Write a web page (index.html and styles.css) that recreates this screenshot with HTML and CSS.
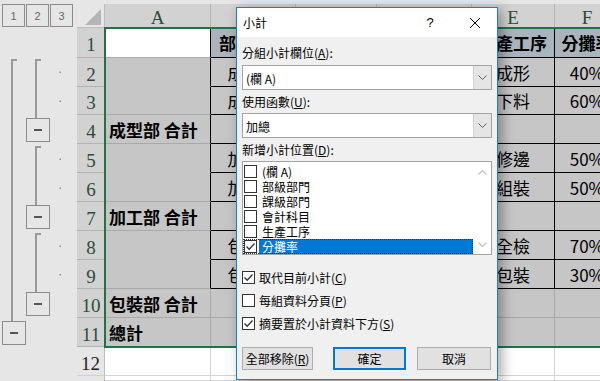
FILE: index.html
```html
<!DOCTYPE html>
<html lang="zh-Hant">
<head>
    <meta charset="UTF-8">
    <title>小計</title>
    <link rel="stylesheet" href="styles.css">
</head>
<body>
    <div class="sheet">
        <!-- encabezado -->
        <div class="levels"><span>1</span><span>2</span><span>3</span></div>
        <div class="corner">
            <svg width="27" height="23" viewBox="0 0 27 23"><polygon points="8,21 24,21 24,5" fill="#b4b4b4"/></svg>
        </div>
        <div class="ch">A</div>
        <div class="ch">B</div>
        <div class="ch">C</div>
        <div class="ch">D</div>
        <div class="ch">E</div>
        <div class="ch">F</div>

        <!-- esquema (outline) -->
        <div class="outline">
            <svg width="77" height="353" viewBox="0 28 77 353">
                <g fill="#9a9a9a">
                    <rect x="11" y="59" width="2" height="262"/>
                    <rect x="11" y="59" width="6" height="2"/>
                    <rect x="35" y="59" width="2" height="59"/>
                    <rect x="35" y="59" width="6" height="2"/>
                    <rect x="35" y="146" width="2" height="59"/>
                    <rect x="35" y="146" width="6" height="2"/>
                    <rect x="35" y="233" width="2" height="59"/>
                    <rect x="35" y="233" width="6" height="2"/>
                </g>
                <g fill="#8f8f8f">
                    <rect x="59.5" y="71.5" width="1.5" height="1.5"/>
                    <rect x="59.5" y="100.5" width="1.5" height="1.5"/>
                    <rect x="59.5" y="158.5" width="1.5" height="1.5"/>
                    <rect x="59.5" y="187.5" width="1.5" height="1.5"/>
                    <rect x="59.5" y="245.5" width="1.5" height="1.5"/>
                    <rect x="59.5" y="274" width="1.5" height="1.5"/>
                </g>
                <g fill="#e6e6e6" stroke="#8c8c8c">
                    <rect x="26.5" y="118.5" width="23" height="23"/>
                    <rect x="26.5" y="205.5" width="23" height="23"/>
                    <rect x="26.5" y="292.5" width="23" height="23"/>
                    <rect x="2.5" y="321.5" width="23" height="23"/>
                </g>
                <g fill="#555">
                    <rect x="34" y="129" width="8" height="2"/>
                    <rect x="34" y="216" width="8" height="2"/>
                    <rect x="34" y="303" width="8" height="2"/>
                    <rect x="10" y="332" width="8" height="2"/>
                </g>
            </svg>
        </div>

        <!-- fila 1 -->
        <div class="rh">1</div>
        <div class="c edge a1"></div>
        <div class="c hd ctr">部級部門</div>
        <div class="c hd ctr">課級部門</div>
        <div class="c hd ctr">會計科目</div>
        <div class="c hd ctr">生產工序</div>
        <div class="c hd ctr">分攤率</div>

        <div class="rh">2</div>
        <div class="c s edge nb"></div>
        <div class="c s t ctr">成型部</div>
        <div class="c s t ctr">成型課</div>
        <div class="c s t ctr">製造費用</div>
        <div class="c s t ctr">成形</div>
        <div class="c s t ctr">40%</div>

        <div class="rh">3</div>
        <div class="c s edge"></div>
        <div class="c s t ctr">成型部</div>
        <div class="c s t ctr">成型課</div>
        <div class="c s t ctr">製造費用</div>
        <div class="c s t ctr">下料</div>
        <div class="c s t ctr">60%</div>

        <div class="rh">4</div>
        <div class="c s edge sum">成型部 合計</div>
        <div class="c s t"></div>
        <div class="c s t"></div>
        <div class="c s t"></div>
        <div class="c s t"></div>
        <div class="c s t"></div>

        <div class="rh">5</div>
        <div class="c s edge nb"></div>
        <div class="c s t ctr">加工部</div>
        <div class="c s t ctr">加工課</div>
        <div class="c s t ctr">製造費用</div>
        <div class="c s t ctr">修邊</div>
        <div class="c s t ctr">50%</div>

        <div class="rh">6</div>
        <div class="c s edge"></div>
        <div class="c s t ctr">加工部</div>
        <div class="c s t ctr">加工課</div>
        <div class="c s t ctr">製造費用</div>
        <div class="c s t ctr">組裝</div>
        <div class="c s t ctr">50%</div>

        <div class="rh">7</div>
        <div class="c s edge sum">加工部 合計</div>
        <div class="c s t"></div>
        <div class="c s t"></div>
        <div class="c s t"></div>
        <div class="c s t"></div>
        <div class="c s t"></div>

        <div class="rh">8</div>
        <div class="c s edge nb"></div>
        <div class="c s t ctr">包裝部</div>
        <div class="c s t ctr">包裝課</div>
        <div class="c s t ctr">製造費用</div>
        <div class="c s t ctr">全檢</div>
        <div class="c s t ctr">70%</div>

        <div class="rh">9</div>
        <div class="c s edge"></div>
        <div class="c s t ctr">包裝部</div>
        <div class="c s t ctr">包裝課</div>
        <div class="c s t ctr">製造費用</div>
        <div class="c s t ctr">包裝</div>
        <div class="c s t ctr">30%</div>

        <div class="rh">10</div>
        <div class="c s sum">包裝部 合計</div>
        <div class="c s"></div>
        <div class="c s"></div>
        <div class="c s"></div>
        <div class="c s"></div>
        <div class="c s"></div>

        <div class="rh">11</div>
        <div class="c s sum">總計</div>
        <div class="c s"></div>
        <div class="c s"></div>
        <div class="c s"></div>
        <div class="c s"></div>
        <div class="c s"></div>

        <div class="rh off">12</div>
        <div class="c"></div>
        <div class="c"></div>
        <div class="c"></div>
        <div class="c"></div>
        <div class="c"></div>
        <div class="c"></div>

        <!-- fila 13, solo se ve el borde superior -->
        <div class="rh off"></div>
        <div class="c"></div>
        <div class="c"></div>
        <div class="c"></div>
        <div class="c"></div>
        <div class="c"></div>
        <div class="c"></div>

        <!-- selección A1:F11 -->
        <div class="selection"></div>
    </div>

    <div class="dialog">
        <div class="titlebar">
            <span class="title">小計</span>
            <span class="help">?</span>
            <span class="close">
                <svg width="10" height="10" viewBox="0 0 10 10"><path d="M0 0L10 10M10 0L0 10" stroke="#000" stroke-width="1"/></svg>
            </span>
        </div>
        <div class="dlg-body">
            <div class="lbl">分組小計欄位(<u>A</u>):</div>
            <div class="combo">
                <span class="val">(欄 A)</span>
                <span class="drop"><svg width="9" height="5" viewBox="0 0 9 5"><path d="M0.5 0.5L4.5 4.5L8.5 0.5" fill="none" stroke="#606060"/></svg></span>
            </div>
            <div class="lbl">使用函數(<u>U</u>):</div>
            <div class="combo fn">
                <span class="val">加總</span>
                <span class="drop"><svg width="9" height="5" viewBox="0 0 9 5"><path d="M0.5 0.5L4.5 4.5L8.5 0.5" fill="none" stroke="#606060"/></svg></span>
            </div>
            <div class="lbl">新增小計位置(<u>D</u>):</div>
            <div class="list">
                <div class="items">
                    <div class="item"><span class="box"></span><span class="txt">(欄 A)</span></div>
                    <div class="item"><span class="box"></span><span class="txt">部級部門</span></div>
                    <div class="item"><span class="box"></span><span class="txt">課級部門</span></div>
                    <div class="item"><span class="box"></span><span class="txt">會計科目</span></div>
                    <div class="item"><span class="box"></span><span class="txt">生產工序</span></div>
                    <div class="item sel">
                        <span class="box"><svg width="11" height="11" viewBox="0 0 11 11"><path d="M1.5 5.5L4.2 8.2L9.5 2.5" fill="none" stroke="#333" stroke-width="1.3"/></svg></span>
                        <span class="txt">分攤率</span>
                    </div>
                </div>
                <div class="vscroll">
                    <svg width="9" height="5" viewBox="0 0 9 5"><path d="M0.5 4.5L4.5 0.5L8.5 4.5" fill="none" stroke="#c2c2c2" stroke-width="1.2"/></svg>
                    <svg width="9" height="5" viewBox="0 0 9 5"><path d="M0.5 0.5L4.5 4.5L8.5 0.5" fill="none" stroke="#c2c2c2" stroke-width="1.2"/></svg>
                </div>
            </div>
            <div class="checks">
                <div class="chk">
                    <span class="box"><svg width="11" height="11" viewBox="0 0 11 11"><path d="M1.5 5.5L4.2 8.2L9.5 2.5" fill="none" stroke="#333" stroke-width="1.3"/></svg></span>
                    取代目前小計(<u>C</u>)
                </div>
                <div class="chk"><span class="box"></span>每組資料分頁(<u>P</u>)</div>
                <div class="chk">
                    <span class="box"><svg width="11" height="11" viewBox="0 0 11 11"><path d="M1.5 5.5L4.2 8.2L9.5 2.5" fill="none" stroke="#333" stroke-width="1.3"/></svg></span>
                    摘要置於小計資料下方(<u>S</u>)
                </div>
            </div>
            <div class="buttons">
                <button class="btn wide">全部移除(<u>R</u>)</button>
                <button class="btn ok">確定</button>
                <button class="btn cancel">取消</button>
            </div>
        </div>
    </div>
</body>
</html>
```

FILE: styles.css
```css
body {
    margin: 0;
    width: 600px;
    height: 381px;
    overflow: hidden;
    position: relative;
    background: #fff;
    font-family: "Noto Sans CJK TC", "Noto Sans", sans-serif;
}

/* hoja */
.sheet {
    position: relative;
    display: grid;
    grid-template-columns: 77px 28px 106px 85px 81px 95px 83px 65px;
    grid-template-rows: 24px 30px 29px 28px repeat(9, 29px) 5px;
    padding-top: 4px;
    width: 620px;
    background: #e6e6e6;
}
.levels {
    display: flex;
    gap: 1px;
    padding-left: 2px;
}
.levels span {
    width: 23px;
    height: 23px;
    box-sizing: border-box;
    border: 1px solid #8c8c8c;
    display: flex;
    align-items: center;
    justify-content: center;
    font: 11px "Liberation Sans", sans-serif;
    color: #666;
}
.corner {
    background: #e6e6e6;
    border-right: 1px solid #bdbdbd;
    border-bottom: 1px solid #bdbdbd;
    box-sizing: border-box;
}
.corner svg {
    display: block;
}
.ch {
    background: #d2d2d2;
    border-right: 1px solid #b3b3b3;
    box-sizing: border-box;
    display: flex;
    justify-content: center;
    align-items: center;
    padding-top: 3px;
    font: 19px "Liberation Serif", serif;
    color: #2b4d3b;
}
.outline {
    grid-column: 1;
    grid-row: 2 / -1;
    background: #e6e6e6;
    overflow: hidden;
}
.outline svg {
    display: block;
}
.rh {
    background: #d2d2d2;
    border-bottom: 1px solid #b3b3b3;
    box-sizing: border-box;
    display: flex;
    justify-content: center;
    align-items: center;
    padding-top: 5px;
    font: 19px "Liberation Serif", serif;
    color: #2b4d3b;
}
.rh.off {
    background: #e6e6e6;
    border-right: 1px solid #bdbdbd;
    border-bottom-color: #d0d0d0;
    color: #222;
}

/* celdas */
.c {
    background: #fff;
    border-right: 1px solid #d4d4d4;
    border-bottom: 1px solid #d4d4d4;
    box-sizing: border-box;
    display: flex;
    align-items: center;
    overflow: hidden;
    white-space: nowrap;
    font-size: 17px;
    color: #000;
}
.s {
    background: #c6c6c6;
    border-color: #a9a9a9;
}
.t {
    border-color: #000;
}
.hd {
    background: #aab4bc;
    border-color: #000;
    font-weight: bold;
}
.edge {
    border-right-color: #000;
}
.a1 {
    border-bottom-color: #a9a9a9;
}
.nb {
    border-bottom-color: transparent;
}
.ctr {
    justify-content: center;
}
.sum {
    font-weight: bold;
    padding-left: 4px;
}
.selection {
    position: absolute;
    left: 104px;
    top: 27px;
    width: 496px;
    height: 321px;
    border: 2px solid #217346;
    border-right: none;
    box-sizing: border-box;
}

/* diálogo */
.dialog {
    position: absolute;
    left: 236px;
    top: 7px;
    width: 262px;
    height: 373px;
    box-sizing: border-box;
    border: 1px solid #1a7dd7;
    background: #f0f0f0;
    box-shadow: 4px 3px 12px rgba(0,0,0,0.35);
    display: flex;
    flex-direction: column;
    font-size: 12px;
    color: #000;
}
.titlebar {
    height: 29px;
    background: #fff;
    display: flex;
    align-items: center;
}
.title {
    flex: 1;
    padding-left: 6px;
}
.help {
    width: 46px;
    text-align: center;
    font: 13px "Liberation Sans", sans-serif;
}
.close {
    width: 44px;
    display: flex;
    justify-content: center;
}
.close svg {
    display: block;
}
.dlg-body {
    display: flex;
    flex-direction: column;
    padding: 0 5px;
}
.lbl {
    height: 16px;
    line-height: 16px;
    margin-top: 4px;
}
.lbl:first-child {
    margin-top: 8px;
}
.combo {
    display: flex;
    height: 25px;
    margin-top: 4px;
    border: 1px solid #a3a3a3;
    background: #fff;
    box-sizing: border-box;
}
.combo.fn {
    margin-top: 3px;
}
.combo .val {
    flex: 1;
    display: flex;
    align-items: center;
    padding-left: 3px;
    padding-top: 1px;
}
.combo .drop {
    width: 18px;
    border-left: 1px solid #cfcfcf;
    background: #e5e5e5;
    box-sizing: border-box;
    display: flex;
    align-items: center;
    justify-content: center;
}
.combo svg, .vscroll svg, .box svg {
    display: block;
}
.list {
    display: flex;
    height: 94px;
    margin-top: 3px;
    border: 1px solid #a3a3a3;
    background: #fff;
    box-sizing: border-box;
    padding: 1px 0;
}
.items {
    flex: 1;
    padding-top: 1px;
}
.item {
    height: 15px;
    display: flex;
    align-items: center;
}
.item .box {
    margin-left: 1px;
}
.item .txt {
    flex: 1;
    margin-left: 2px;
    padding-left: 3px;
    line-height: 15px;
    height: 15px;
}
.item.sel {
    outline: 1px dotted #333;
    outline-offset: -1px;
}
.item.sel .txt {
    background: #0078d7;
    color: #fff;
}
.vscroll {
    width: 18px;
    display: flex;
    flex-direction: column;
    justify-content: space-between;
    align-items: center;
    padding: 7px 0 6px;
}
.box {
    width: 13px;
    height: 13px;
    flex: none;
    border: 1px solid #333;
    background: #fff;
    box-sizing: border-box;
}
.checks {
    margin-top: 11px;
}
.chk {
    height: 23px;
    display: flex;
    align-items: center;
}
.chk .box {
    margin-right: 4px;
}
.buttons {
    display: flex;
    margin-top: 12px;
}
.btn {
    height: 23px;
    padding: 0;
    border: 1px solid #adadad;
    background: #e1e1e1;
    box-sizing: border-box;
    font: inherit;
    color: #000;
    display: flex;
    align-items: center;
    justify-content: center;
}
.btn.wide {
    width: 71px;
}
.btn.ok {
    width: 73px;
    margin-left: 20px;
    border: 2px solid #0078d7;
}
.btn.cancel {
    width: 74px;
    margin-left: 11px;
}
```
